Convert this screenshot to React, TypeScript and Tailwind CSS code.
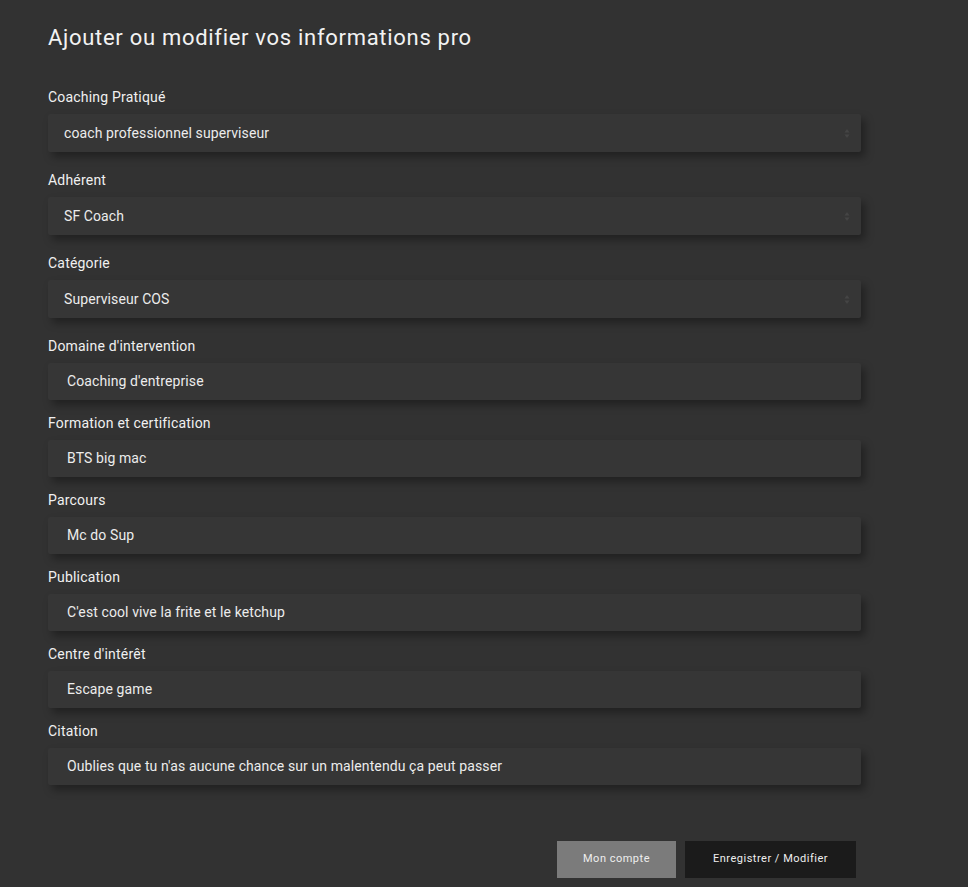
import React from "react";

const font = { fontFamily: "Roboto, 'Noto Sans', sans-serif" };

type Field = { label: string; value: string; select?: boolean };

const fields: Field[] = [
  { label: "Coaching Pratiqué", value: "coach professionnel superviseur", select: true },
  { label: "Adhérent", value: "SF Coach", select: true },
  { label: "Catégorie", value: "Superviseur COS", select: true },
  { label: "Domaine d'intervention", value: "Coaching d'entreprise" },
  { label: "Formation et certification", value: "BTS big mac" },
  { label: "Parcours", value: "Mc do Sup" },
  { label: "Publication", value: "C'est cool vive la frite et le ketchup" },
  { label: "Centre d'intérêt", value: "Escape game" },
  { label: "Citation", value: "Oublies que tu n'as aucune chance sur un malentendu ça peut passer" },
];

function Arrows() {
  return (
    <svg width="6" height="11" viewBox="0 0 6 11" className="text-[#454545]">
      <path d="M3 1 L5.5 4.5 H0.5 Z" fill="currentColor" />
      <path d="M3 10 L5.5 6.5 H0.5 Z" fill="currentColor" />
    </svg>
  );
}

export default function App() {
  return (
    <main className="min-h-[887px] bg-[#323232] text-white" style={font}>
      <div className="pl-12 pr-[107px] pt-[24px]">
        <h1 className="text-[22px] leading-[28px] tracking-[0.7px] text-[#f2f2f2] mb-[36px]">
          Ajouter ou modifier vos informations pro
        </h1>

        <div>
          {fields.map((f) => (
            <div key={f.label} className={f.select ? "pb-[19px]" : "pb-[14px]"}>
              <label className="block text-[14px] leading-[18px] tracking-[0.2px] text-[#f0f0f0] mb-[8px]">
                {f.label}
              </label>
              <div
                className={
                  "flex items-center justify-between bg-[#363636] shadow-[4px_5px_8px_rgba(0,0,0,0.35)] rounded-[2px] " +
                  (f.select ? "h-[38px] pl-4 pr-[11px]" : "h-[37px] pl-[19px] pr-4")
                }
              >
                <span className="text-[14px] tracking-[0.1px] text-[#ececec]">{f.value}</span>
                {f.select && <Arrows />}
              </div>
            </div>
          ))}
        </div>

        <div className="flex justify-end gap-[9px] mt-[42px] pr-[5px]">
          <button className="h-[37px] w-[119px] bg-[#7b7b7b] text-[11px] tracking-[0.5px] text-[#eeeeee]">
            Mon compte
          </button>
          <button className="h-[37px] w-[171px] bg-[#1b1b1b] text-[11px] tracking-[0.5px] text-[#eeeeee]">
            Enregistrer / Modifier
          </button>
        </div>
      </div>
    </main>
  );
}
